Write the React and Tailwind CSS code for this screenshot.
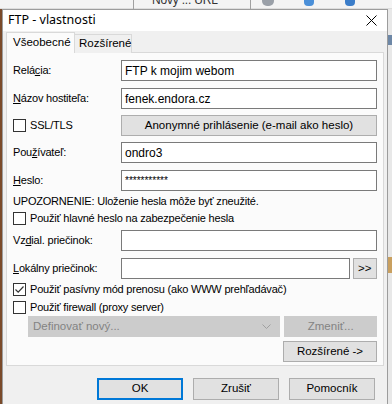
import React from 'react';

const Check = ({ checked }) => (
    <span className="w-[13px] h-[13px] border border-[#333333] bg-white flex items-center justify-center shrink-0">
        {checked && (
            <svg width="11" height="11" viewBox="0 0 11 11">
                <path d="M1.5 5.5 L4.2 8.2 L9.5 2.5" fill="none" stroke="#333333" strokeWidth="1.2" />
            </svg>
        )}
    </span>
);

const Field = ({ value, className = '' }) => (
    <div className={`h-[21px] border border-[#7a7a7a] bg-white px-[3px] flex items-center text-black text-[12px] tracking-normal ${className}`}>{value}</div>
);

const Button = ({ children, className = '', disabled }) => (
    <div
        className={`h-[21px] border flex items-center justify-center text-[11.5px] tracking-normal ${
            disabled ? 'border-[#cccccc] bg-[#cccccc] text-[#838383]' : 'border-[#adadad] bg-[#e1e1e1] text-black'
        } ${className}`}
    >
        {children}
    </div>
);

const Row = ({ label, children, className = '' }) => (
    <div className={`flex items-center ${className}`}>
        <span className="w-[108px] shrink-0">{label}</span>
        {children}
    </div>
);

const App = () => {
    return (
        <div className="relative w-[392px] h-[404px] overflow-hidden bg-[#f0f0f0] font-['Liberation_Sans',Arial,sans-serif] text-[11px] tracking-[-0.2px] text-black">
            {/* parent window peeking out behind the dialog */}
            <div className="absolute left-0 top-0 w-[392px] h-[9px] bg-[#f3f3f3] border-b border-[#dddddd]">
                <div className="absolute left-[133px] top-0 w-px h-[9px] bg-[#a0a0a0]" />
                <span className="absolute left-[152px] top-[-9px] text-[12px] text-[#333]">Nový ... URL</span>
                <div className="absolute left-[250px] top-0 w-px h-[9px] bg-[#a0a0a0]" />
                <div className="absolute left-[262px] top-[-4px] w-[12px] h-[10px] rounded-full bg-[#9aa0a8]" />
                <div className="absolute left-[304px] top-[-4px] w-[10px] h-[10px] rounded-sm bg-[#4a8fd8]" />
                <div className="absolute left-[345px] top-[-4px] w-[10px] h-[10px] rounded-sm bg-[#3b7dc9]" />
            </div>
            <div className="absolute left-[388px] top-[9px] w-[4px] h-[395px] bg-[#e8e8e8]">
                <div className="absolute left-0 top-[26px] w-[4px] h-[10px] bg-[#6d87a6]" />
                <div className="absolute left-0 top-[248px] w-[4px] h-[16px] bg-[#c9a060]" />
            </div>
            <div className="absolute left-0 top-[9px] w-[2px] h-[395px] bg-[#7a4a2a]" />

            {/* dialog */}
            <div className="absolute left-[2px] top-[9px] w-[386px] h-[400px] border border-[#9c9c9c] bg-[#f0f0f0] flex flex-col">
                <div className="h-[21px] bg-white flex items-center justify-between pl-[5px] pr-[10px] tracking-normal">
                    <span className="text-[12.5px] font-['Noto_Sans',sans-serif] leading-none">FTP - vlastnosti</span>
                    <svg width="11" height="11" viewBox="0 0 11 11">
                        <path d="M0.5 0.5 L10.5 10.5 M10.5 0.5 L0.5 10.5" stroke="#000" strokeWidth="1" />
                    </svg>
                </div>

                <div className="px-[3px] pt-[1px]">
                    <div className="flex items-end h-[21px] text-[11.5px] tracking-normal">
                        <div className="h-[21px] w-[69px] pl-[6px] bg-[#fbfbfb] border border-b-0 border-[#d9d9d9] flex items-center relative z-10">Všeobecné</div>
                        <div className="h-[19px] w-[57px] pl-[4px] bg-[#f0f0f0] border border-l-0 border-b-0 border-[#d9d9d9] flex items-center">Rozšírené</div>
                    </div>
                    <div className="mt-[-1px] border border-[#d9d9d9] bg-[#fbfbfb] px-[6px] pt-[7px] pb-[3px] flex flex-col">
                        <Row label={<>Relá<u>c</u>ia:</>}>
                            <Field value="FTP k mojim webom" className="w-[262px]" />
                        </Row>
                        <Row label={<><u>N</u>ázov hostiteľa:</>} className="mt-[7px]">
                            <Field value="fenek.endora.cz" className="w-[262px]" />
                        </Row>
                        <Row
                            label={
                                <span className="flex items-center gap-[4px]">
                                    <Check /> SSL/TLS
                                </span>
                            }
                            className="mt-[6px]"
                        >
                            <Button className="w-[262px]">Anonymné prihlásenie (e-mail ako heslo)</Button>
                        </Row>
                        <Row label={<>Pou<u>ž</u>ívateľ:</>} className="mt-[6px]">
                            <Field value="ondro3" className="w-[262px]" />
                        </Row>
                        <Row label={<><u>H</u>eslo:</>} className="mt-[7px]">
                            <Field value="***********" className="w-[262px] !text-[10px]" />
                        </Row>
                        <div className="mt-[2px] h-[16px] flex items-center">UPOZORNENIE: Uloženie hesla môže byť zneužité.</div>
                        <div className="h-[17px] mt-[1px] flex items-center gap-[4px]">
                            <Check /> Použiť hlavné heslo na zabezpečenie hesla
                        </div>
                        <Row label={<>Vz<u>d</u>ial. priečinok:</>} className="mt-[3px]">
                            <Field value="" className="w-[262px]" />
                        </Row>
                        <Row label={<><u>L</u>okálny priečinok:</>} className="mt-[7px]">
                            <Field value="" className="w-[234px]" />
                            <Button className="w-[25px] ml-[3px] text-[#1a4f9c]">&gt;&gt;</Button>
                        </Row>
                        <div className="h-[17px] mt-[2px] flex items-center gap-[4px]">
                            <Check checked /> Použiť pasívny mód prenosu (ako WWW prehľadávač)
                        </div>
                        <div className="h-[17px] mt-[1px] flex items-center gap-[4px]">
                            <Check /> Použiť firewall (proxy server)
                        </div>
                        <div className="mt-[0px] flex items-center pl-[15px]">
                            <div className="w-[256px] h-[21px] bg-[#cccccc] border border-[#cccccc] flex items-center justify-between pl-[4px] pr-[8px] text-[#838383] text-[11.5px] tracking-normal">
                                Definovať nový...
                                <svg width="9" height="5" viewBox="0 0 9 5">
                                    <path d="M0.5 0.5 L4.5 4.5 L8.5 0.5" fill="none" stroke="#a0a0a0" strokeWidth="1" />
                                </svg>
                            </div>
                            <Button disabled className="w-[94px] ml-[4px]">Zmeniť...</Button>
                        </div>
                        <div className="mt-[4px] flex justify-end">
                            <Button className="w-[94px]">Rozšírené -&gt;</Button>
                        </div>
                    </div>
                </div>

                <div className="mt-[12px] flex justify-end gap-[10px] pr-[12px]">
                    <Button className="w-[86px] !h-[22px] !border-[#0078d7] border-2">OK</Button>
                    <Button className="w-[86px] !h-[22px]">Zrušiť</Button>
                    <Button className="w-[86px] !h-[22px]">Pomocník</Button>
                </div>
            </div>
        </div>
    );
};

export default App;
